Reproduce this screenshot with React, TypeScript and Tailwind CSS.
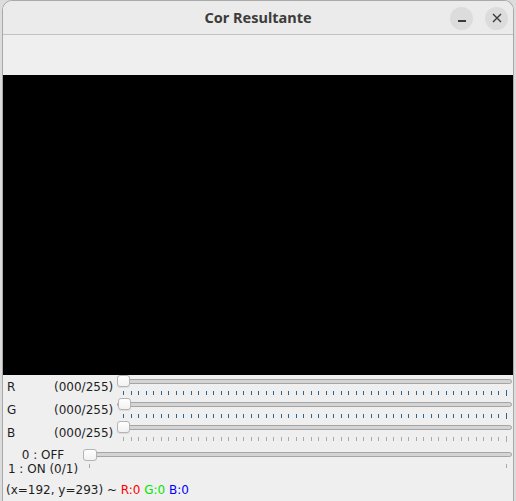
import React from 'react'

const TICK_BLUE = '#2a6592'
const TICK_GRAY = '#a9a9a9'

interface SliderProps {
  count: number
  tickColor: string
  offset?: number
}

// horizontal slider with the tick marks underneath, Qt style
function Slider({ count, tickColor, offset = 0 }: SliderProps) {
  const width = 396
  const inner = width - 13
  const ticks = Array.from({ length: count }, (_, i) => (i * inner) / (count - 1))
  return (
    <div className="flex flex-col flex-1">
      <div className="relative h-[14px]">
        <div className="absolute left-0 right-[1px] top-[4px] h-[5px] rounded-full border border-[#a5a5a5] bg-[#d4d4d4]" />
        <div
          className="absolute top-0 w-[13px] h-[12px] rounded-[3px] border border-[#b4b4b4] bg-gradient-to-b from-white to-[#f1f1f1] shadow-[0_1px_0_rgba(0,0,0,0.08)]"
          style={{ left: offset }}
        />
      </div>
      <svg width={width} height={6} className="mt-[1px]">
        {ticks.map((x, i) => {
          const last = i === ticks.length - 1
          const px = Math.round(x + 6) + 0.5
          return (
            <line
              key={i}
              x1={px}
              x2={px}
              y1={last ? 0 : 1}
              y2={last ? 6 : 5}
              stroke={tickColor}
              strokeWidth={1}
            />
          )
        })}
      </svg>
    </div>
  )
}

function ColorRow({ label, tickColor, offset }: { label: string; tickColor: string; offset?: number }) {
  return (
    <div className="flex h-[23px] pl-[4px]">
      <div className="flex w-[115px] pt-[5px] leading-[14px]">
        <span className="w-[47px]">{label}</span>
        <span>(000/255)</span>
      </div>
      <Slider count={52} tickColor={tickColor} offset={offset} />
    </div>
  )
}

export default function App() {
  return (
    <div className="w-[516px] h-[501px] bg-[#dcdcdc] overflow-hidden">
      <div className="ml-[2px] mr-[2px] h-full flex flex-col rounded-t-[10px] border-x border-t border-[#a9a9a9] bg-[#efefef] overflow-hidden">
        {/* header bar */}
        <div className="grid grid-cols-[1fr_auto_1fr] items-center h-[34px] bg-[#ebebeb] border-b border-[#c2c2c2] shrink-0">
          <div />
          <div className="font-['Noto_Sans',sans-serif] font-bold text-[14.5px] text-[#3c3c3c] pt-[1px]">Cor Resultante</div>
          <div className="flex justify-end items-center gap-[12px] pr-[5px] pt-[1px]">
            <div className="w-[23px] h-[23px] rounded-full bg-[#dcdcdc] flex items-center justify-center">
              <div className="w-[8px] h-[1.5px] bg-[#3a3a3a] mt-[6px]" />
            </div>
            <div className="w-[23px] h-[23px] rounded-full bg-[#dcdcdc] flex items-center justify-center">
              <svg width="10" height="10" viewBox="0 0 10 10">
                <path d="M1 1L9 9M9 1L1 9" stroke="#3a3a3a" strokeWidth="1.4" />
              </svg>
            </div>
          </div>
        </div>

        {/* empty toolbar strip */}
        <div className="h-[40px] shrink-0 bg-[#efefef]" />

        {/* resulting colour */}
        <div className="h-[300px] shrink-0 bg-black" />

        {/* controls */}
        <div className="flex flex-col font-['DejaVu_Sans',sans-serif] text-[12px] text-[#1e1e1e]">
          <ColorRow label="R" tickColor={TICK_BLUE} />
          <ColorRow label="G" tickColor={TICK_BLUE} offset={1} />
          <ColorRow label="B" tickColor={TICK_GRAY} />

          <div className="flex h-[34px]">
            <div className="flex flex-col items-center w-[80px] pt-[5px] leading-[13.5px]">
              <span>0 : OFF</span>
              <span>1 : ON (0/1)</span>
            </div>
            <div className="flex flex-col flex-1 pt-[5px]">
              <div className="relative h-[14px]">
                <div className="absolute left-0 right-[1px] top-[3px] h-[5px] rounded-full border border-[#a5a5a5] bg-[#d4d4d4]" />
                <div className="absolute top-0 left-0 w-[14px] h-[12px] rounded-[3px] border border-[#b4b4b4] bg-gradient-to-b from-white to-[#f1f1f1]" />
              </div>
              <div className="flex justify-between px-[6px] mt-[1px]">
                <div className="w-[1px] h-[4px] bg-[#a9a9a9]" />
                <div className="w-[1px] h-[4px] bg-[#a9a9a9]" />
              </div>
            </div>
          </div>

          <div className="pl-[3px] pt-[5px] leading-[14px]">
            (x=192, y=293) ~ <span className="text-[#ff0000]">R:0</span>{' '}
            <span className="text-[#00e600]">G:0</span>{' '}
            <span className="text-[#0000ff]">B:0</span>
          </div>
        </div>
      </div>
    </div>
  )
}
